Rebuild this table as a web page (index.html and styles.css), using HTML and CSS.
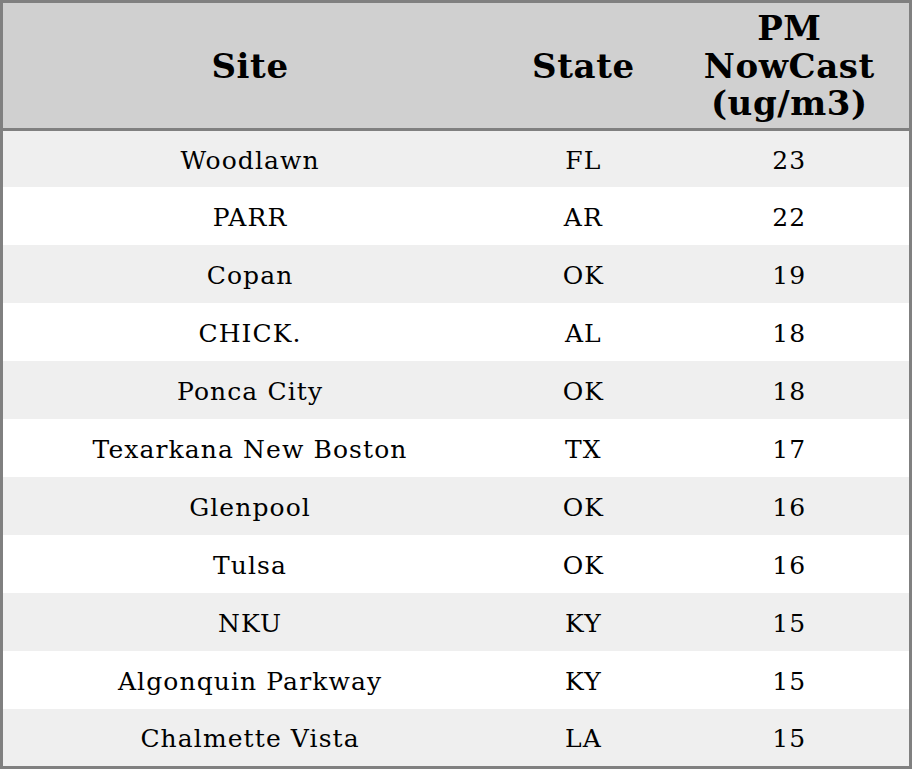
FILE: index.html
```html
<!DOCTYPE html>
<html>
<head>
<meta charset="utf-8">
<link rel="stylesheet" href="styles.css">
</head>
<body>
<table class="aq">
  <colgroup>
    <col class="c-site">
    <col class="c-state">
    <col class="c-pm">
  </colgroup>
  <thead>
    <tr><th>Site</th><th>State</th><th>PM<br>NowCast<br>(ug/m3)</th></tr>
  </thead>
  <tbody>
    <tr><td>Woodlawn</td><td>FL</td><td>23</td></tr>
    <tr><td>PARR</td><td>AR</td><td>22</td></tr>
    <tr><td>Copan</td><td>OK</td><td>19</td></tr>
    <tr><td>CHICK.</td><td>AL</td><td>18</td></tr>
    <tr><td>Ponca City</td><td>OK</td><td>18</td></tr>
    <tr><td>Texarkana New Boston</td><td>TX</td><td>17</td></tr>
    <tr><td>Glenpool</td><td>OK</td><td>16</td></tr>
    <tr><td>Tulsa</td><td>OK</td><td>16</td></tr>
    <tr><td>NKU</td><td>KY</td><td>15</td></tr>
    <tr><td>Algonquin Parkway</td><td>KY</td><td>15</td></tr>
    <tr><td>Chalmette Vista</td><td>LA</td><td>15</td></tr>
  </tbody>
</table>
</body>
</html>
```
FILE: styles.css
```css
html, body { margin: 0; padding: 0; background: #fff; }
.aq {
  width: 912px;
  border-collapse: collapse;
  border: 3px solid #808080;
  font-family: "DejaVu Serif", serif;
  color: #000;
  table-layout: fixed;
}
.c-site { width: 494px; }
.c-state { width: 172px; }
.c-pm { width: 240px; }
.aq th {
  background: #d0d0d0;
  font-size: 34px;
  font-weight: bold;
  letter-spacing: 0.6px;
  line-height: 37.5px;
  height: 123px;
  padding: 2px 0 0;
  text-align: center;
  vertical-align: middle;
  border-bottom: 3px solid #808080;
}
.aq td {
  font-size: 25px;
  letter-spacing: 1.1px;
  height: 56px;
  padding: 2px 0 0;
  text-align: center;
  vertical-align: middle;
}
.aq tbody tr:first-child td { height: 54px; }
.aq tbody tr:last-child td { height: 55px; }
.aq tbody tr:nth-child(odd) { background: #efefef; }
.aq tbody tr:nth-child(even) { background: #fff; }
```
